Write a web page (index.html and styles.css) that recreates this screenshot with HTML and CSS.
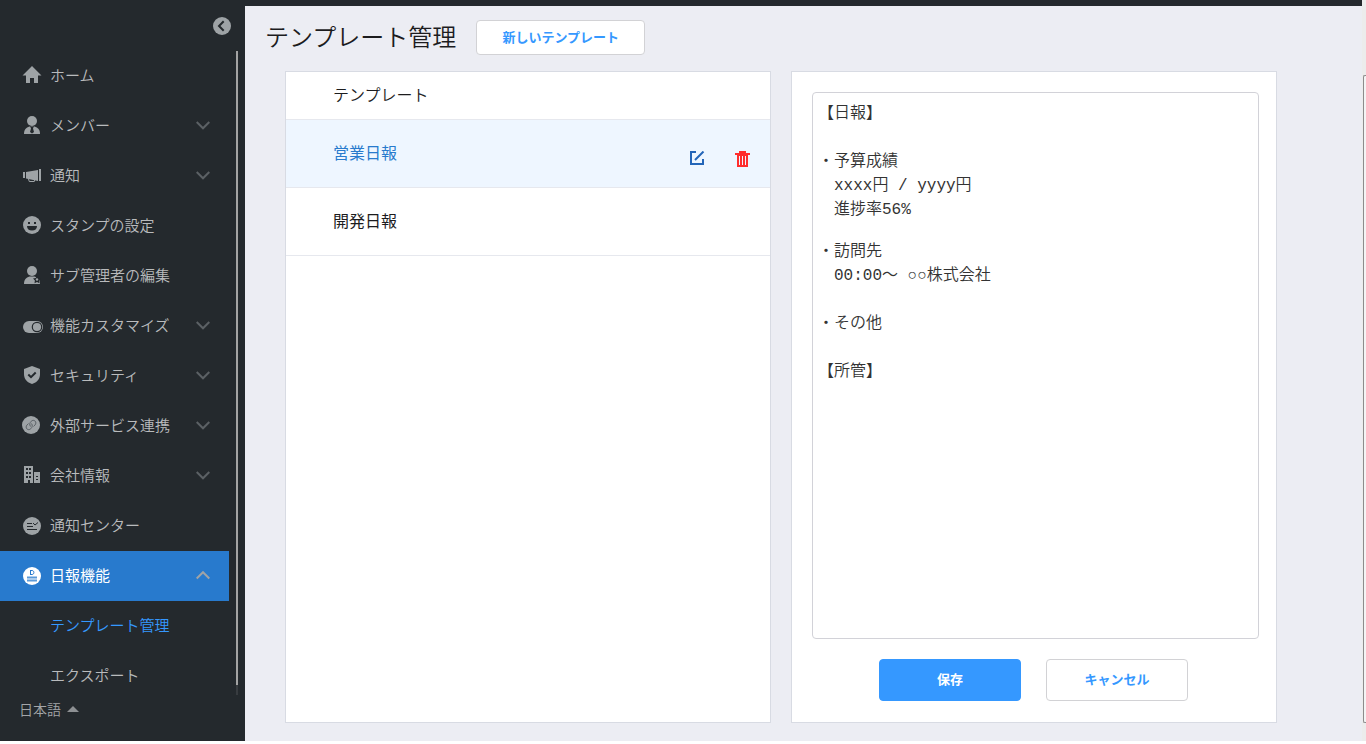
FILE: index.html
```html
<!DOCTYPE html>
<html lang="ja">
<head>
<meta charset="utf-8">
<title>テンプレート管理</title>
<link rel="stylesheet" href="styles.css">
</head>
<body>
<div class="app">
  <aside class="sidebar">
    <div class="sidebar-top">
      <button class="collapse" type="button" aria-label="メニューを閉じる">
        <svg width="18" height="18" viewBox="0 0 18 18"><circle cx="9" cy="9" r="9" fill="#9ea3a6"/><path d="M10.700 4.200 6 9l4.700 4.800" fill="none" stroke="#24292d" stroke-width="2"/></svg>
      </button>
    </div>
    <div class="nav-area">
      <nav class="nav">
        <a class="nav-item" href="#">
          <svg class="icon" viewBox="0 0 20 20"><path d="M10 1 .5 10.500H4V18h4v-5h4v5h4v-7.500h3.500z"/></svg>
          <span>ホーム</span>
        </a>
        <a class="nav-item" href="#">
          <svg class="icon" viewBox="0 0 20 20"><circle cx="10" cy="6" r="5"/><path d="M2 19c0-4.500 2-6.500 5.500-7.500h5c3.500 1 5.500 3 5.500 7.500z"/><path class="cut" d="m8 11 2 1 2-1-1 2.500 1 3.500-2 1.500L8 17l1-3.500z"/></svg>
          <span>メンバー</span>
          <svg class="chevron" viewBox="0 0 14 9"><path d="m.7 1 6.300 6.300L13.300 1"/></svg>
        </a>
        <a class="nav-item" href="#">
          <svg class="icon" viewBox="0 0 20 20"><path d="M1 7h2v6H1zM4 7l12-2v11L4 13.500zM17 4h2v12h-2z"/><path class="line" d="m6.500 14 .8 2.500h5l.4-1.500"/></svg>
          <span>通知</span>
          <svg class="chevron" viewBox="0 0 14 9"><path d="m.7 1 6.300 6.300L13.300 1"/></svg>
        </a>
        <a class="nav-item" href="#">
          <svg class="icon" viewBox="0 0 20 20"><circle cx="10" cy="10" r="9"/><path class="cut" d="M6 7h2v2H6zM12 7h2v2h-2zM5 11h10c0 3-2 4.500-5 4.500S5 14 5 11z"/></svg>
          <span>スタンプの設定</span>
        </a>
        <a class="nav-item" href="#">
          <svg class="icon" viewBox="0 0 20 20"><circle cx="10" cy="6" r="5"/><path d="M2 19c0-4.500 2-6.500 5.500-7.500h5c3.500 1 5.500 3 5.500 7.500z"/><path class="cut" d="m15 10.800 1.300 2.300 2.700.5-1.900 2 .4 2.700-2.500-1.200-2.500 1.200.4-2.700-1.900-2 2.700-.5z"/><circle cx="15" cy="14.500" r="1.200"/></svg>
          <span>サブ管理者の編集</span>
        </a>
        <a class="nav-item" href="#">
          <svg class="icon icon-wide" viewBox="0 0 22 20"><rect x="1" y="6" width="20" height="12" rx="6"/><circle class="cut" cx="15" cy="12" r="5.300"/><circle cx="15" cy="12" r="4.100"/></svg>
          <span>機能カスタマイズ</span>
          <svg class="chevron" viewBox="0 0 14 9"><path d="m.7 1 6.300 6.300L13.300 1"/></svg>
        </a>
        <a class="nav-item" href="#">
          <svg class="icon" viewBox="0 0 20 20"><path d="m10 1 8 3v5c0 5-3 8.500-8 10-5-1.500-8-5-8-10V4z"/><path class="cut-line" d="m6.300 9.500 2.700 2.700 4.700-4.700"/></svg>
          <span>セキュリティ</span>
          <svg class="chevron" viewBox="0 0 14 9"><path d="m.7 1 6.300 6.300L13.300 1"/></svg>
        </a>
        <a class="nav-item" href="#">
          <svg class="icon" viewBox="0 0 20 20"><circle cx="9" cy="10" r="9"/><g class="chain"><path d="M8.500 11.500C7 9.500 8 7.500 9.200 6.300c1.200-1.200 2.800-1.300 3.900-.2s1 2.700-.1 3.900l-1.500 1.500"/><path d="M9.500 8.500c1.500 2 .5 4-.7 5.200-1.200 1.200-2.800 1.300-3.900.2s-1-2.700.1-3.900l1.500-1.500"/></g></svg>
          <span>外部サービス連携</span>
          <svg class="chevron" viewBox="0 0 14 9"><path d="m.7 1 6.300 6.300L13.300 1"/></svg>
        </a>
        <a class="nav-item" href="#">
          <svg class="icon" viewBox="0 0 20 20"><path d="M2 1h9v17H8v-3H6v3H2zM12 7h6v11h-6z"/><path class="cut" d="M4 3h2v2H4zM7 3h2v2H7zM4 7h2v2H4zM7 7h2v2H7zM4 11h2v2H4zM7 11h2v2H7zM14 11h2v1h-2zM14 14h2v1h-2z"/></svg>
          <span>会社情報</span>
          <svg class="chevron" viewBox="0 0 14 9"><path d="m.7 1 6.300 6.300L13.300 1"/></svg>
        </a>
        <a class="nav-item" href="#">
          <svg class="icon" viewBox="0 0 20 20"><circle cx="10" cy="11" r="9"/><path class="cut-line thin" d="M5 8.500h5M5 11.500h6M5 14.500h10M11 8l2 2 3-2.500"/></svg>
          <span>通知センター</span>
        </a>
        <a class="nav-item active" href="#">
          <svg class="icon" viewBox="0 0 20 20"><circle cx="10" cy="11" r="9"/><path class="cut-line thin" d="M8 5.500h2c2.500 0 2.500 4 0 4H8m.500-4v4"/><path class="rule" d="M5 12.500h10M5 15.500h10"/></svg>
          <span>日報機能</span>
          <svg class="chevron" viewBox="0 0 14 9"><path d="M.7 7.500 7 1.200l6.300 6.300"/></svg>
        </a>
        <a class="nav-item sub current" href="#">テンプレート管理</a>
        <a class="nav-item sub" href="#">エクスポート</a>
      </nav>
      <div class="nav-scroll"><div class="nav-thumb"></div></div>
    </div>
    <button class="language" type="button">日本語<span class="caret"></span></button>
  </aside>

  <main class="main">
    <header class="page-head">
      <h1 class="page-title">テンプレート管理</h1>
      <button class="btn btn-new" type="button">新しいテンプレート</button>
    </header>
    <div class="panels">
      <section class="panel">
        <h2 class="list-head">テンプレート</h2>
        <ul class="list">
          <li class="row selected">
            <a class="row-name" href="#">営業日報</a>
            <div class="row-tools">
              <button class="tool" type="button" aria-label="編集">
                <svg width="16" height="16" viewBox="0 0 16 16"><path d="M7 1H2v12h12V8M6 9 14.500.5" fill="none" stroke="#2365b8" stroke-width="2"/></svg>
              </button>
              <button class="tool" type="button" aria-label="削除">
                <svg width="16" height="16" viewBox="0 0 16 16"><path d="M0 2h4V0h7v2h4v2H0zM2 4h11v12H2z" fill="#ff2d2d"/><path d="M4.500 5v9M7.500 5v9M10.500 5v9" stroke="#eef6ff"/></svg>
              </button>
            </div>
          </li>
          <li class="row"><a class="row-name" href="#">開発日報</a></li>
        </ul>
      </section>
      <form class="panel editor">
        <textarea class="editor-text" aria-label="テンプレート本文" spellcheck="false">【日報】
　
・予算成績
　xxxx円 / yyyy円
　進捗率56%

・訪問先
　00:00〜 ○○株式会社
　
・その他
　
【所管】</textarea>
        <div class="actions">
          <button class="btn btn-wide btn-primary" type="button">保存</button>
          <button class="btn btn-wide" type="button">キャンセル</button>
        </div>
      </form>
    </div>
  </main>
  <div class="page-scroll"><div class="page-thumb"></div></div>
</div>
</body>
</html>
```
FILE: styles.css
```css
* {
  box-sizing: border-box;
}

body {
  margin: 0;
  background: #fff;
  color: #1c1c1e;
  font-family: "Noto Sans CJK JP", sans-serif;
  font-size: 16px;
  font-weight: 350;
}

button {
  font-family: inherit;
  cursor: pointer;
}

a {
  color: inherit;
  text-decoration: none;
}

.app {
  display: flex;
  height: calc(100vh - 3px);
}

/* Sidebar */
.sidebar {
  display: flex;
  flex-direction: column;
  flex: 0 0 245px;
  background: #24292d;
  color: #b9bbbd;
}

.sidebar-top {
  display: flex;
  justify-content: flex-end;
  flex: 0 0 51px;
  padding: 17px 14px 0 0;
}

.collapse {
  width: 18px;
  height: 18px;
  padding: 0;
  border: 0;
  background: none;
}

.collapse svg,
.tool svg {
  display: block;
}

.nav-area {
  display: flex;
  flex: 1;
  justify-content: space-between;
  min-height: 0;
  padding-right: 7px;
}

.nav {
  width: 229px;
  overflow: hidden;
}

.nav-item {
  display: flex;
  align-items: center;
  height: 50px;
  padding: 0 19px 2px 22px;
  font-size: 15px;
  line-height: 24px;
}

.nav-item span {
  flex: 1;
}

.icon {
  width: 20px;
  height: 20px;
  margin-right: 8px;
  fill: #9ea3a6;
}

.icon-wide {
  width: 22px;
  margin-right: 6px;
}

.icon .cut {
  fill: #24292d;
}

.icon .cut-line {
  fill: none;
  stroke: #24292d;
  stroke-width: 2;
}

.icon .thin {
  stroke-width: 1;
}

.icon .line {
  fill: none;
  stroke: #9ea3a6;
}

.icon .chain {
  fill: none;
  stroke: #5d6368;
}

.icon .rule {
  stroke: #5b9ad9;
  stroke-width: 2;
}

.chevron {
  width: 14px;
  height: 9px;
  fill: none;
  stroke: #5b6064;
  stroke-width: 2;
}

.active {
  background: #287acd;
  color: #fff;
  font-weight: 400;
}

.active .icon {
  fill: #fff;
}

.active .cut-line {
  stroke: #287acd;
}

.active .chevron {
  stroke: #a0a3a6;
}

.sub {
  padding-left: 50px;
}

.current {
  color: #3598ff;
}

.nav-scroll {
  width: 2px;
  background: #383c40;
}

.nav-thumb {
  height: calc(100% - 10px);
  background: #a3a3a3;
}

.language {
  display: flex;
  align-items: center;
  flex: 0 0 46px;
  gap: 6px;
  padding: 0 0 18px 19px;
  border: 0;
  background: none;
  color: #a3a5a8;
  font-size: 14px;
  font-weight: 350;
}

.caret {
  border: 6px solid transparent;
  border-top: 0;
  border-bottom-color: #8d9093;
}

/* Content */
.main {
  display: flex;
  flex: 1;
  flex-direction: column;
  min-width: 0;
  padding: 14px 85px 18px 20px;
  border-top: 6px solid #24292d;
  background: #ecedf3;
}

.page-head {
  display: flex;
  align-items: center;
  gap: 20px;
  margin-bottom: 16px;
}

.page-title {
  margin: 0;
  padding-bottom: 3px;
  font-size: 24px;
  font-weight: 350;
  line-height: 32px;
}

.btn {
  padding: 0 0 3px;
  border: 1px solid #d2d2d5;
  border-radius: 4px;
  background: #fff;
  color: #3598ff;
  font-size: 13px;
  font-weight: 700;
}

.btn-new {
  width: 169px;
  height: 35px;
}

.panels {
  display: grid;
  flex: 1;
  grid-template-columns: 1fr 1fr;
  gap: 20px;
  min-height: 0;
  padding-left: 20px;
}

.panel {
  border: 1px solid #d8dbe3;
  background: #fff;
}

.list-head {
  margin: 0;
  padding: 0 47px 2px;
  border-bottom: 1px solid #e6e8ee;
  font-size: 16px;
  font-weight: 350;
  line-height: 45px;
}

.list {
  margin: 0;
  padding: 0;
  list-style: none;
}

.row {
  display: flex;
  justify-content: space-between;
  height: 68px;
  padding: 0 19px 0 47px;
  border-bottom: 1px solid #e6e8ee;
  line-height: 65px;
}

.row-name {
  font-weight: 400;
}

.selected {
  background: #eef6ff;
  color: #287acd;
}

.row-tools {
  display: flex;
  gap: 30px;
  padding-top: 31px;
}

.tool {
  width: 16px;
  height: 16px;
  padding: 0;
  border: 0;
  background: none;
}

.editor {
  display: flex;
  flex-direction: column;
  padding: 20px 17px 21px 20px;
}

.editor-text {
  flex: 1;
  width: 100%;
  padding: 6px 5px;
  border: 1px solid #d2d2d8;
  border-radius: 4px;
  background: #fff;
  color: #333;
  font-family: "Liberation Mono", "Noto Sans CJK JP", monospace;
  font-size: 16px;
  font-weight: 350;
  line-height: normal;
  resize: none;
}

.actions {
  display: flex;
  justify-content: center;
  gap: 25px;
  margin-top: 20px;
  padding-right: 4px;
}

.btn-wide {
  width: 142px;
  height: 42px;
}

.btn-primary {
  border-color: #3598ff;
  background: #3598ff;
  color: #fff;
}

/* Window scroll track */
.page-scroll {
  flex: 0 0 4px;
  padding: 75px 0 18px 1px;
  background: #ececec;
}

.page-thumb {
  height: 100%;
  border: 1px solid #8c8c8c;
  border-right: 0;
  border-radius: 2px 0 0 2px;
  background: #f4f4f4;
}
```
